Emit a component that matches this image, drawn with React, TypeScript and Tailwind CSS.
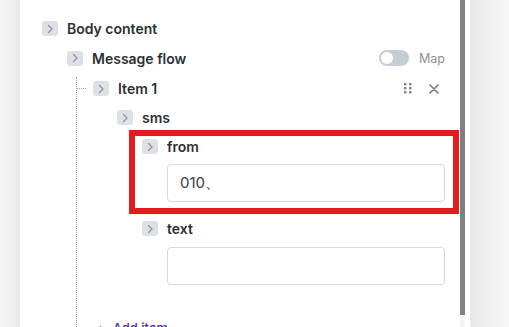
import React from "react";

function Chevron() {
  return (
    <div className="flex h-[15px] w-[16px] shrink-0 items-center justify-center rounded-[3px] bg-[#dde1e6]">
      <svg width="8" height="10" viewBox="0 0 8 10" fill="none">
        <path d="M2.5 1.5 L6 5 L2.5 8.5" stroke="#8c939b" strokeWidth="1.2" strokeLinecap="round" strokeLinejoin="round" />
      </svg>
    </div>
  );
}

function Label({ children }: { children: React.ReactNode }) {
  return <span className="ml-[9px] text-[14px] font-semibold leading-[15px] text-[#2c3034]">{children}</span>;
}

export default function App() {
  return (
    <div
      className="flex h-[327px] w-[509px] overflow-hidden"
      style={{ fontFamily: "Inter, 'Noto Sans', sans-serif" }}
    >
      <div className="w-[20px] shrink-0 bg-gradient-to-r from-[#f7f7f7] to-[#e9e9e9]" />
      <div className="relative w-[450px] shrink-0 overflow-hidden bg-white">
        <div className="pl-[22px] pr-[25px] pt-[21px]">
          {/* Body content */}
          <div className="flex items-center">
            <Chevron />
            <Label>Body content</Label>
          </div>
          {/* Message flow */}
          <div className="mt-[14px] flex items-center pl-[25px]">
            <Chevron />
            <Label>Message flow</Label>
            <div className="ml-auto flex items-center">
              <div className="flex h-[16px] w-[30px] items-center rounded-full bg-[#c7cdd4] px-[2px]">
                <div className="h-[12px] w-[12px] rounded-full bg-white" />
              </div>
              <span className="ml-[10px] text-[12.5px] leading-[15px] text-[#8d8f92]">Map</span>
            </div>
          </div>
          {/* Item list */}
          <div className="ml-[34px] mt-[11px] h-[300px] border-l border-dotted border-[#a0a0a0] pt-[4px]">
            <div className="flex items-center">
              <span className="w-[9px] border-t border-dotted border-[#a0a0a0]" />
              <div className="ml-[7px]">
                <Chevron />
              </div>
              <Label>Item 1</Label>
              <div className="ml-auto flex items-center">
                <svg width="8" height="11" viewBox="0 0 8 11">
                  {[0, 4, 8].map((y) =>
                    [0, 5].map((x) => <rect key={`${x}-${y}`} x={x} y={y} width="2.4" height="2.4" fill="#7a8189" />)
                  )}
                </svg>
                <svg className="ml-[17px] mr-[6px]" width="10" height="10" viewBox="0 0 10 10">
                  <path d="M1 1 L9 9 M9 1 L1 9" stroke="#6e7680" strokeWidth="1.6" strokeLinecap="round" />
                </svg>
              </div>
            </div>
            {/* sms */}
            <div className="mt-[14px] flex items-center pl-[40px]">
              <Chevron />
              <Label>sms</Label>
            </div>
            <div className="pl-[65px]">
              {/* from */}
              <div className="mt-[14px] flex items-center">
                <Chevron />
                <Label>from</Label>
              </div>
              <div className="ml-[25px] mt-[10px] flex h-[38px] items-center rounded-[4px] border border-[#d9d9d9] pl-[12px] text-[15px] text-[#3a3d40]">
                010、
              </div>
              {/* text */}
              <div className="mt-[19px] flex items-center">
                <Chevron />
                <Label>text</Label>
              </div>
              <div className="ml-[25px] mt-[11px] h-[38px] rounded-[4px] border border-[#d9d9d9]" />
            </div>
            <div className="ml-[19px] mt-[36px] flex items-center text-[13px] font-medium leading-[15px] text-[#5b2b96]">
              <span>+</span>
              <span className="ml-[8px]">Add item</span>
            </div>
          </div>
        </div>
        {/* annotation highlight */}
        <div className="absolute left-[109px] top-[130px] h-[84px] w-[330px] border-[6px] border-[#e41c1c]" />
        {/* scrollbar */}
        <div className="absolute left-[440px] top-0 h-[315px] w-[5px] bg-[#808080]" />
        <div className="absolute left-[440px] top-[315px] h-[12px] w-[5px] bg-[#f4f4f4]" />
      </div>
      <div className="flex-1 bg-gradient-to-r from-[#e8e8e8] to-[#f7f7f7]" />
    </div>
  );
}
